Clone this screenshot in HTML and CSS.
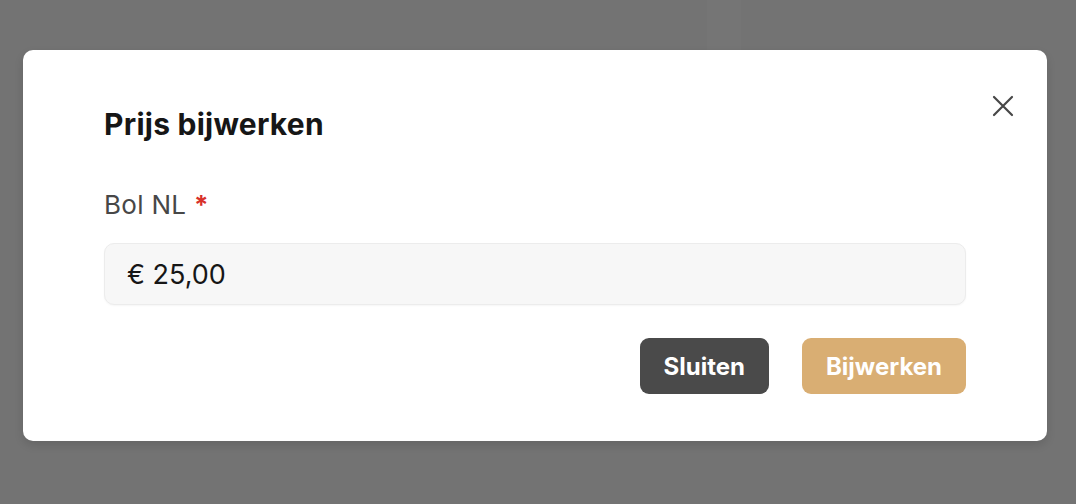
FILE: index.html
```html
<!DOCTYPE html>
<html lang="nl">
<head>
    <meta charset="UTF-8">
    <meta name="viewport" content="width=device-width, initial-scale=1.0">
    <title>Prijs bijwerken</title>
    <link rel="stylesheet" href="styles.css">
</head>
<body>
    <div class="backdrop">
        <div class="modal">
            <button class="close" type="button" aria-label="Sluiten">
                <svg width="24" height="24" viewBox="0 0 24 24">
                    <path d="M3 3 L21 21 M21 3 L3 21" stroke="#474747" stroke-width="2.2" stroke-linecap="round" fill="none"/>
                </svg>
            </button>

            <h2 class="title">Prijs bijwerken</h2>

            <form class="form">
                <label class="label" for="price">Bol NL <span class="req">*</span></label>
                <input class="input" type="text" id="price" value="€ 25,00">

                <div class="actions">
                    <button type="button" class="btn btn-dark">Sluiten</button>
                    <button type="button" class="btn btn-gold">Bijwerken</button>
                </div>
            </form>
        </div>
    </div>
</body>
</html>
```

FILE: styles.css
```css
body {
    margin: 0;
    padding: 0;
    background-color: #737373;
    font-family: Inter, "Noto Sans", Arial, sans-serif;
    height: 504px;
    overflow: hidden;
}

.backdrop {
    padding: 50px 0 0 23px;
    background-image: linear-gradient(to right, transparent 707px, #757575 707px, #757575 741px, transparent 741px);
    background-size: 100% 50px;
    background-repeat: no-repeat;
}

.modal {
    position: relative;
    width: 1024px;
    height: 391px;
    box-sizing: border-box;
    padding: 0 81px;
    background-color: #fff;
    border-radius: 10px;
    box-shadow: 0 4px 10px rgba(0, 0, 0, 0.12);
}

.close {
    position: absolute;
    top: 44px;
    right: 32px;
    width: 24px;
    height: 24px;
    padding: 0;
    border: none;
    background: none;
    cursor: pointer;
}

.title {
    margin: 0;
    padding-top: 56px;
    font-size: 30px;
    font-weight: 700;
    line-height: 36px;
    letter-spacing: 0.25px;
    color: #161616;
}

.form {
    margin-top: 47px;
}

.label {
    display: block;
    font-size: 26px;
    line-height: 32px;
    letter-spacing: 0.3px;
    color: #474747;
}

.req {
    color: #d8312a;
    font-weight: 700;
}

.input {
    display: block;
    width: 100%;
    height: 62px;
    margin-top: 22px;
    padding: 0 22px;
    box-sizing: border-box;
    border: 1px solid #ececec;
    border-radius: 10px;
    background-color: #f7f7f7;
    font-family: inherit;
    font-size: 27px;
    color: #161616;
    box-shadow: 0 1px 2px rgba(0, 0, 0, 0.04);
}

.actions {
    display: flex;
    justify-content: flex-end;
    gap: 33px;
    margin-top: 33px;
}

.btn {
    height: 56px;
    padding: 0 24px;
    border: none;
    border-radius: 9px;
    font-family: inherit;
    font-size: 24px;
    font-weight: 700;
    color: #fff;
    cursor: pointer;
}

.btn-dark {
    background-color: #4a4a4a;
}

.btn-gold {
    background-color: #d9ae73;
}
```
